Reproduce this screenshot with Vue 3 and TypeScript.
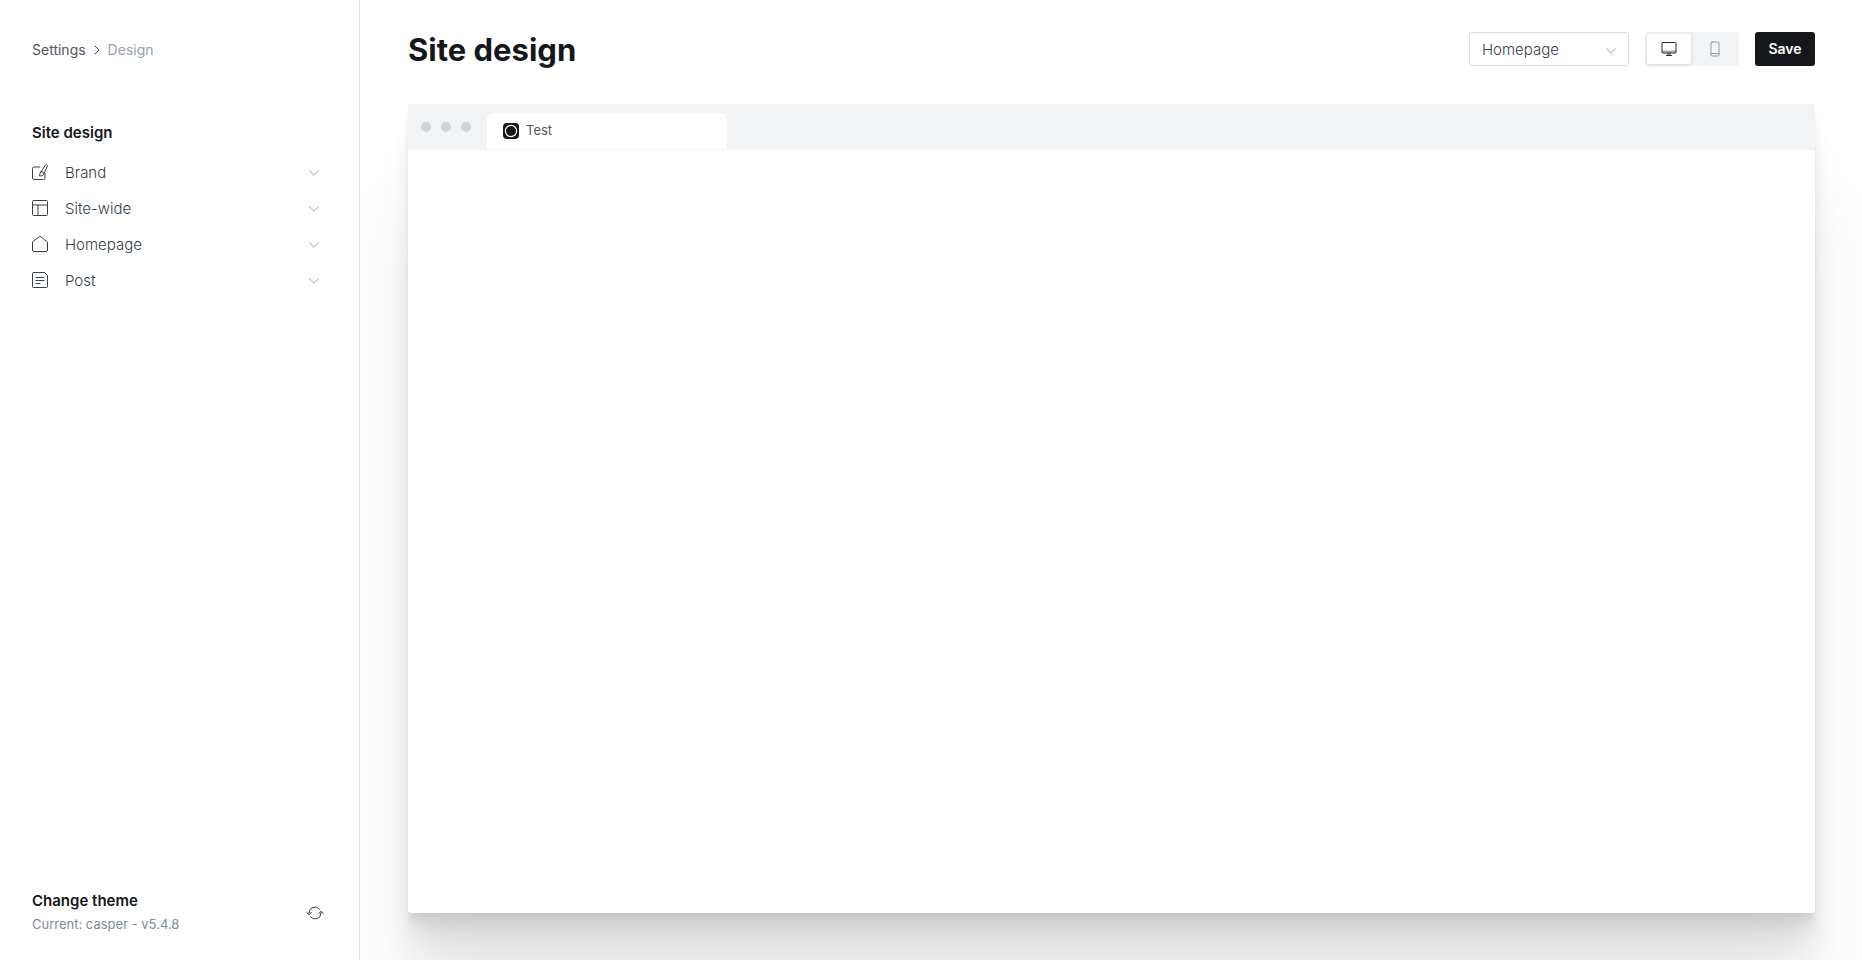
<script setup lang="ts">
import { ref } from 'vue'

type Section = { id: string; label: string }

const sections: Section[] = [
  { id: 'brand', label: 'Brand' },
  { id: 'site', label: 'Site-wide' },
  { id: 'home', label: 'Homepage' },
  { id: 'post', label: 'Post' },
]
const page = ref('Homepage')
const device = ref<'desktop' | 'mobile'>('desktop')
</script>

<template>
  <div class="app">
    <aside class="sidebar">
      <nav class="crumbs" aria-label="Breadcrumb">
        <a href="#settings">Settings</a>
        <svg class="crumb-arrow" viewBox="0 0 6 10" aria-hidden="true"><path d="M1 1l4 4-4 4" /></svg>
        <span class="current">Design</span>
      </nav>

      <h2 class="group-title">Site design</h2>
      <ul class="sections">
        <li v-for="s in sections" :key="s.id">
          <button type="button" class="section">
            <svg class="section-icon" viewBox="0 0 16 16" aria-hidden="true">
              <g v-if="s.id === 'brand'">
                <path d="M8 3H2A1.500 1.500 0 0 0 .5 4.500V14A1.500 1.500 0 0 0 2 15.500h9.500A1.500 1.500 0 0 0 13 14V9.500" />
                <path d="M9 7.800L13.300 1.300c.8-1.200 2.500-.2 2 1L12 9.500" />
                <path d="M9 7.800c1.300-.4 3 .5 3 1.800-.1 2-2.200 2.700-4.800 2.200 1.100-.9.100-3.400 1.800-4z" />
              </g>
              <g v-else-if="s.id === 'site'">
                <rect x=".5" y=".5" width="15" height="15" rx="1" />
                <path d="M.5 5h15M6 5v10.500" />
              </g>
              <path v-else-if="s.id === 'home'" d="M.5 6.200V14a1.500 1.500 0 0 0 1.500 1.500h12a1.500 1.500 0 0 0 1.500-1.500V6.200L9 .9a1.600 1.600 0 0 0-2 0z" />
              <g v-else>
                <path d="M1.500 .5h11l3 3v11a1 1 0 0 1-1 1h-13a1 1 0 0 1-1-1v-13a1 1 0 0 1 1-1z" />
                <path d="M4 5.500h8M4 8.500h8M4 11.500h4" />
              </g>
            </svg>
            <span class="section-label">{{ s.label }}</span>
            <svg class="chevron" viewBox="0 0 10 6" aria-hidden="true"><path d="M.5 .7L5 5.200 9.500 .7" /></svg>
          </button>
        </li>
      </ul>

      <button type="button" class="theme">
        <span class="theme-text">
          <strong>Change theme</strong>
          <span>Current: casper - v5.4.8</span>
        </span>
        <svg class="refresh" viewBox="0 0 18 14" aria-hidden="true">
          <path d="M3 8.500V7a6 6 0 0 1 10.600-3.800M15 5.500V7A6 6 0 0 1 4.400 10.800" />
          <path d="M.6 6.300L3 8.700l2.400-2.400M12.600 7.700L15 5.300l2.400 2.400" />
        </svg>
      </button>
    </aside>

    <main class="main">
      <header class="topbar">
        <h1>Site design</h1>
        <div class="actions">
          <div class="select-wrap">
            <select v-model="page" aria-label="Preview page">
              <option>Homepage</option>
              <option>Post</option>
            </select>
            <svg class="chevron select-chevron" viewBox="0 0 10 6" aria-hidden="true"><path d="M.5 .7L5 5.200 9.500 .7" /></svg>
          </div>
          <div class="devices" role="group" aria-label="Preview device">
            <button type="button" :class="{ active: device === 'desktop' }" aria-label="Desktop" @click="device = 'desktop'">
              <svg class="desktop-icon" viewBox="0 0 16 14" aria-hidden="true">
                <rect x="1" y=".5" width="14" height="10.500" rx="1" />
                <path class="soft" d="M1.500 9.500h13" />
                <path d="M7 11v2M9 11v2M5.500 13.500h5" />
              </svg>
            </button>
            <button type="button" :class="{ active: device === 'mobile' }" aria-label="Mobile" @click="device = 'mobile'">
              <svg class="mobile-icon" viewBox="0 0 10 16" aria-hidden="true">
                <rect x="1" y="1" width="8" height="14" rx="1" />
                <path d="M1 12.500h8" />
              </svg>
            </button>
          </div>
          <button type="button" class="save">Save</button>
        </div>
      </header>

      <section class="preview" aria-label="Site preview">
        <div class="chrome">
          <div class="dots"><i></i><i></i><i></i></div>
          <div class="tab">
            <svg class="favicon" viewBox="0 0 16 16" aria-hidden="true">
              <rect width="16" height="16" rx="4" />
              <circle cx="8" cy="8" r="5.600" />
            </svg>
            <span>Test</span>
          </div>
        </div>
      </section>
    </main>
  </div>
</template>

<style>
body {
  margin: 0;
  background: #fff;
}
</style>

<style scoped>
.app {
  display: flex;
  min-height: 100vh;
  font-family: Inter, "Open Sans", sans-serif;
  font-size: 15px;
  color: #394047;
}
.app *,
.app {
  box-sizing: border-box;
}
button,
select {
  font: inherit;
  color: inherit;
  border: 0;
  background: none;
  cursor: pointer;
}
svg {
  display: block;
  flex: none;
  fill: none;
  stroke: currentColor;
  stroke-linecap: round;
  stroke-linejoin: round;
}
.sidebar {
  flex: none;
  width: 360px;
  display: flex;
  flex-direction: column;
  padding: 40px 32px 24px;
  border-right: 1px solid #dfe1e3;
  background: #fff;
}
.crumbs {
  display: flex;
  align-items: center;
  gap: 8px;
  font-size: 14px;
  line-height: 20px;
}
.crumbs a {
  color: #50565d;
  text-decoration: none;
}
.crumb-arrow {
  width: 6px;
  height: 10px;
}
.current {
  color: #95a1ad;
}
.group-title {
  margin: 63px 0 11px;
  font-size: 15px;
  line-height: 20px;
  font-weight: 600;
  color: #15171a;
}
.sections {
  margin: 0;
  padding: 0;
  list-style: none;
}
.section {
  display: flex;
  align-items: center;
  width: 100%;
  height: 36px;
  padding: 0 8px 0 0;
  gap: 17px;
  text-align: left;
  font-weight: 300;
}
.section-icon {
  width: 16px;
  height: 16px;
}
.section-label {
  flex: 1;
}
.chevron {
  width: 10px;
  height: 6px;
  color: #9ba6b2;
}
.section .chevron {
  margin-top: 2px;
}
.theme {
  display: flex;
  align-items: center;
  justify-content: space-between;
  margin-top: auto;
  padding: 0 3px 0 0;
  text-align: left;
}
.theme-text {
  display: flex;
  flex-direction: column;
}
.theme strong {
  font-weight: 600;
  line-height: 22px;
  color: #15171a;
}
.theme-text span {
  font-size: 13px;
  line-height: 24px;
  color: #7c8b9a;
}
.refresh {
  width: 18px;
  height: 14px;
}
.main {
  flex: 1;
  min-width: 0;
  display: flex;
  flex-direction: column;
  padding: 32px 47px 47px 48px;
  overflow: hidden;
}
.topbar {
  display: flex;
  justify-content: space-between;
  align-items: center;
  height: 34px;
  margin-bottom: 38px;
}
h1 {
  margin: 0;
  padding-top: 2px;
  font-size: 31px;
  line-height: 34px;
  font-weight: 700;
  color: #15171a;
}
.actions {
  display: flex;
  gap: 16px;
}
.select-wrap {
  position: relative;
  width: 160px;
}
select {
  appearance: none;
  width: 100%;
  height: 34px;
  padding: 0 32px 0 12px;
  border: 1px solid #d7dbdf;
  border-radius: 3px;
  background: #fff;
  font-weight: 300;
}
.select-chevron {
  position: absolute;
  right: 13px;
  top: 16px;
  pointer-events: none;
}
.devices {
  display: flex;
  gap: 2px;
  padding: 2px;
  border-radius: 3px;
  background: #f1f3f4;
}
.devices button {
  display: grid;
  place-items: center;
  width: 44px;
  height: 30px;
  padding: 0;
  border-radius: 3px;
  color: #8e9cac;
}
.devices .active {
  background: #fff;
  color: #26292d;
  box-shadow: 0 1px 4px rgba(0, 0, 0, 0.12);
}
.desktop-icon {
  width: 16px;
  height: 14px;
}
.desktop-icon .soft {
  stroke-width: 2;
  opacity: 0.4;
}
.mobile-icon {
  width: 10px;
  height: 16px;
}
.save {
  width: 60px;
  height: 34px;
  padding: 0 0 2px;
  border-radius: 3px;
  background: #15171a;
  color: #fff;
  font-size: 14px;
  font-weight: 600;
}
.preview {
  flex: 1;
  border-radius: 3px;
  background: #fff;
  box-shadow:
    0 0 1px rgba(0, 0, 0, 0.04),
    0 3px 2px rgba(0, 0, 0, 0.02),
    0 7px 5px rgba(0, 0, 0, 0.028),
    0 13px 10px rgba(0, 0, 0, 0.035),
    0 22px 18px rgba(0, 0, 0, 0.042),
    0 42px 33px rgba(0, 0, 0, 0.05),
    0 100px 80px rgba(0, 0, 0, 0.07);
}
.chrome {
  display: flex;
  align-items: flex-end;
  gap: 16px;
  height: 46px;
  padding: 0 13px 1px;
  border-radius: 3px 3px 0 0;
  background: #f1f3f4;
}
.dots {
  display: flex;
  gap: 10px;
  padding-bottom: 17px;
}
.dots i {
  width: 10px;
  height: 10px;
  border-radius: 50%;
  background: #ced4d9;
}
.tab {
  display: flex;
  align-items: center;
  gap: 7px;
  width: 240px;
  height: 36px;
  padding: 0 16px;
  border-radius: 6px 6px 0 0;
  background: #fff;
  font-size: 13px;
}
.tab span {
  padding-bottom: 2px;
  color: #50565d;
}
.favicon {
  width: 16px;
  height: 16px;
  fill: #15171a;
  stroke: none;
}
.favicon circle {
  stroke: #fff;
  stroke-width: 1.2;
}
</style>
